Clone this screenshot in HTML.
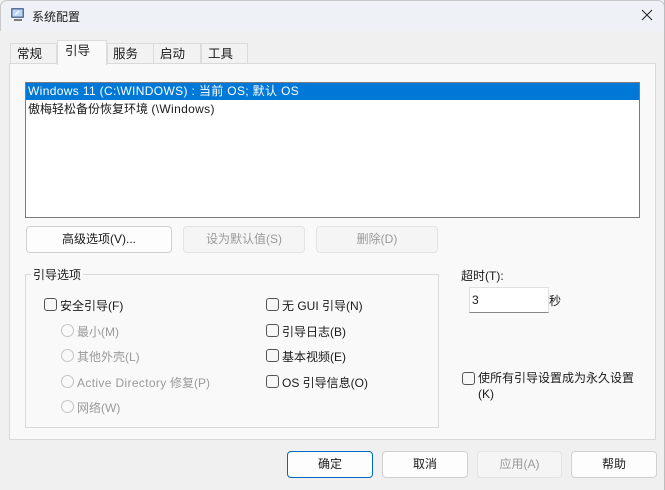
<!DOCTYPE html>
<html><head><meta charset="utf-8"><style>
*{box-sizing:border-box;margin:0;padding:0}
body{width:665px;height:490px;overflow:hidden;background:#f0f0f0;font-family:"Liberation Sans","Noto Sans CJK SC",sans-serif;font-size:12px;color:#1a1a1a;position:relative}
.a{position:absolute;white-space:nowrap}
.title{left:0;top:0;width:665px;height:31px;background:#eef2f6;border:1px solid #c8c8c8;border-bottom:none;border-radius:7px 7px 0 0}
.tab{position:absolute;top:43px;height:21px;border:1px solid #dcdcdc;border-bottom:none;background:#f2f2f2;padding-left:6px;line-height:20px;font-size:12.5px}
.panel{left:9px;top:63px;width:647px;height:377px;background:#f9f9f9;border:1px solid #d9d9d9}
.btn{position:absolute;height:27px;border:1px solid #d0d0d0;border-radius:4px;background:#fdfdfd;text-align:center;line-height:25px}
.dis{color:#9a9a9a;background:#f5f5f5;border-color:#e3e3e3}
.cb{position:absolute;width:13px;height:13px;border:1px solid #555;border-radius:3px;background:#f7f7f7}
.rb{position:absolute;width:13px;height:13px;border:1px solid #c4c4c4;border-radius:50%}
.g{color:#9a9a9a}
.l{letter-spacing:0.35px}
</style></head><body>
<div class="a title"></div>
<svg class="a" style="left:10px;top:7px" width="16" height="16" viewBox="0 0 16 16"><rect x="1" y="1" width="13" height="10" fill="#5a6f9a" rx="1"/><rect x="2.5" y="2.5" width="10" height="7" fill="#bcd4f5"/><path d="M5 8l4-4" stroke="#fff" stroke-width="1.2"/><rect x="4" y="12" width="8" height="2" fill="#7a7a7a"/></svg>
<div class="a" style="left:32px;top:8px">系统配置</div>
<svg class="a" style="left:641px;top:9px" width="12" height="12"><path d="M1 1L11 11M11 1L1 11" stroke="#222" stroke-width="1"/></svg>
<div class="tab" style="left:10px;width:47px">常规</div>
<div class="tab" style="left:107px;width:47px;padding-left:5px">服务</div>
<div class="tab" style="left:153px;width:48px">启动</div>
<div class="tab" style="left:201px;width:47px">工具</div>
<div class="a panel"></div>
<div class="tab" style="left:57px;top:40px;height:25px;width:50px;background:#f9f9f9;padding-left:7px;line-height:21px;z-index:2">引导</div>
<div class="a" style="left:25px;top:82px;width:615px;height:136px;background:#fff;border:1px solid #7a7a7a"></div>
<div class="a l" style="left:26px;top:83px;width:613px;height:17px;background:#0078d7;color:#fff;padding-left:2px;line-height:17px">Windows 11 (C:\WINDOWS) : 当前 OS; 默认 OS</div>
<div class="a" style="left:28px;top:101px;line-height:17px">傲梅轻松备份恢复环境 <span class="l">(\Windows)</span></div>
<div class="btn" style="left:26px;top:226px;width:146px">高级选项(V)...</div>
<div class="btn dis" style="left:183px;top:226px;width:122px">设为默认值(S)</div>
<div class="btn dis" style="left:316px;top:226px;width:122px">删除(D)</div>
<div class="a" style="left:25px;top:274px;width:414px;height:154px;border:1px solid #d9d9d9"></div>
<div class="a" style="left:31px;top:266px;background:#f9f9f9;padding:0 2px">引导选项</div>
<div class="cb" style="left:44px;top:298px"></div><div class="a" style="left:60px;top:297px">安全引导(F)</div>
<div class="rb" style="left:61px;top:324px"></div><div class="a g" style="left:77px;top:323px">最小(M)</div>
<div class="rb" style="left:61px;top:349px"></div><div class="a g" style="left:77px;top:348px">其他外壳(L)</div>
<div class="rb" style="left:61px;top:375px"></div><div class="a g" style="left:77px;top:374px"><span class="l">Active Directory</span> 修复(P)</div>
<div class="rb" style="left:61px;top:400px"></div><div class="a g" style="left:77px;top:399px">网络(W)</div>
<div class="cb" style="left:266px;top:298px"></div><div class="a" style="left:282px;top:297px">无 GUI 引导(N)</div>
<div class="cb" style="left:266px;top:324px"></div><div class="a" style="left:282px;top:323px">引导日志(B)</div>
<div class="cb" style="left:266px;top:349px"></div><div class="a" style="left:282px;top:348px">基本视频(E)</div>
<div class="cb" style="left:266px;top:375px"></div><div class="a" style="left:282px;top:374px">OS 引导信息(O)</div>
<div class="a" style="left:461px;top:267px">超时(T):</div>
<div class="a" style="left:469px;top:287px;width:80px;height:26px;background:#fff;border:1px solid #e0e0e0;border-bottom-color:#888;padding-left:2px;line-height:24px">3</div>
<div class="a" style="left:549px;top:292px">秒</div>
<div class="cb" style="left:462px;top:372px"></div>
<div class="a" style="left:478px;top:370px;line-height:16px">使所有引导设置成为永久设置<br>(K)</div>
<div class="btn" style="left:287px;top:451px;width:86px;border:1px solid #0067c0;line-height:25px">确定</div>
<div class="btn" style="left:382px;top:451px;width:86px">取消</div>
<div class="btn dis" style="left:477px;top:451px;width:85px">应用(A)</div>
<div class="btn" style="left:571px;top:451px;width:86px">帮助</div>
<div class="a" style="left:664px;top:0;width:1px;height:490px;background:#bdbdbd"></div>
</body></html>
